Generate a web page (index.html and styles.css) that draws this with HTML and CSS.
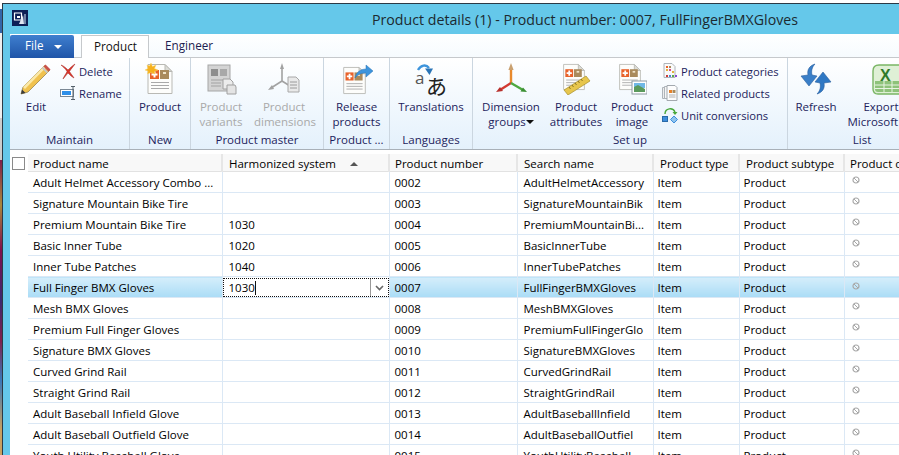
FILE: index.html
```html
<!DOCTYPE html>
<html lang="en">
<head>
    <meta charset="UTF-8">
    <title>Product details</title>
    <link rel="stylesheet" href="styles.css">
</head>
<body>
    <svg class="defs" width="0" height="0">
        <symbol id="doc" viewBox="0 0 30 32">
            <path d="M3 1.500h17l7 7v22H3z" fill="#fdfdfb" stroke="#b9b9b4"/>
            <path d="M20 1.500v7h7z" fill="#dcdcd6" stroke="#b9b9b4"/>
            <rect x="5" y="7" width="9" height="9" fill="#e8622a"/>
            <path d="M9.500 8.500v6M6.500 11.500h6" stroke="#fff" stroke-width="2"/>
            <rect x="15" y="7" width="9" height="9" fill="#a98a5c"/>
            <rect x="18" y="9" width="3" height="2" fill="#efe3c8"/>
            <path d="M6 19.500h18M6 22.500h18M6 25.500h18" stroke="#a9a9a9"/>
        </symbol>
        <symbol id="axes" viewBox="0 0 32 32">
            <path d="M16 20V5" stroke="#e8892c" stroke-width="2.400"/>
            <path d="M16 0l2.600 7h-5.200z" fill="#c9a070"/>
            <path d="M16 20L5 27" stroke="#d23a32" stroke-width="2.400"/>
            <path d="M1 29l4-5 3 4z" fill="#b8302c"/>
            <path d="M16 20l12 7" stroke="#4ea83f" stroke-width="2.400"/>
            <path d="M32 29l-6.500-.5 2.500-4z" fill="#3b8f33"/>
        </symbol>
        <symbol id="blocked" viewBox="0 0 8 8">
            <circle cx="4" cy="4" r="3" fill="none" stroke="#a8a8a8" stroke-width="1.200"/>
            <path d="M2 2l4 4" stroke="#a8a8a8"/>
        </symbol>
    </svg>

    <div class="desktop-strip"></div>
    <div class="window">
        <div class="titlebar">
            <svg class="app-icon" width="16" height="16" viewBox="0 0 16 16">
                <rect width="16" height="16" fill="#0c1f56"/>
                <path d="M2.500 3h7v7h-7z" fill="none" stroke="#fff" stroke-width="1.200"/>
                <path d="M5 6h3v2H5z" fill="#fff"/>
                <path d="M7 14l4-9 1 9z" fill="#dfe6f2"/>
                <path d="M13 4v10" stroke="#9fb0cc" stroke-width="1.400"/>
            </svg>
            <div class="title">Product details (1) - Product number: 0007, FullFingerBMXGloves</div>
        </div>

        <div class="tabs">
            <div class="file-tab">File <span class="file-caret"></span></div>
            <div class="tab active">Product</div>
            <div class="tab">Engineer</div>
        </div>

        <div class="ribbon">
            <div class="group maintain">
                <div class="group-body">
                    <div class="big edit-btn">
                        <div class="big-icon">
                            <svg width="32" height="32" viewBox="0 0 32 32">
                                <path d="M1 31l2-7L25 2l5 5L8 29z" fill="#f0c24f" stroke="#8d7a45" stroke-width=".7"/>
                                <path d="M3 24L25 2l1.800 1.800L5 26z" fill="#fbe9a8"/>
                                <path d="M25.500 1.500l5 5-2 2-5-5z" fill="#c8524c"/>
                                <path d="M23 4l5 5-1.200 1.200-5-5z" fill="#c4c8cc"/>
                                <path d="M1 31l1-4.500 3.500 3.500z" fill="#3b3b3b"/>
                            </svg>
                        </div>
                        <div class="big-label">Edit</div>
                    </div>
                    <div class="small-list">
                        <div class="small">
                            <svg width="16" height="16" viewBox="0 0 16 16">
                                <path d="M1 2c3 1 5 3 7 5 2-2 4-4 7-6-2 3-4 5-5.500 7.500C11 11 13 13 14 15c-2-1-4-3-6-5-2 2-3 4-5 6 1-3 3-5 4-7.500C5 5 3 4 1 2z" fill="#d8342a" stroke="#a82a24" stroke-width=".5"/>
                            </svg>
                            <span>Delete</span>
                        </div>
                        <div class="small">
                            <svg width="16" height="16" viewBox="0 0 16 16">
                                <rect x=".5" y="4.500" width="13" height="7" fill="#fff" stroke="#7a8794"/>
                                <rect x="2" y="6" width="9" height="4" fill="#2f8fe8"/>
                                <path d="M11 1.500h4M13 1.500v13M11 14.500h4" stroke="#55606b" fill="none"/>
                            </svg>
                            <span>Rename</span>
                        </div>
                    </div>
                </div>
                <div class="group-title">Maintain</div>
            </div>

            <div class="group new-group">
                <div class="group-body">
                    <div class="big wide">
                        <div class="big-icon">
                            <svg width="30" height="32" viewBox="0 0 30 32">
                                <use href="#doc"/>
                                <path d="M6 0l1.500 3.500L11 2 9.500 5.500 13 7 9.500 8.500 10 11 6 9.500 2.500 11 3 8 0 7l3-1.500L2 2l2.500 1z" fill="#f6b01e" stroke="#f9d66a" stroke-width=".5"/>
                            </svg>
                        </div>
                        <div class="big-label">Product</div>
                    </div>
                </div>
                <div class="group-title">New</div>
            </div>

            <div class="group master">
                <div class="group-body">
                    <div class="big wide disabled">
                        <div class="big-icon">
                            <svg width="32" height="32" viewBox="0 0 32 32">
                                <rect x="3" y="2" width="22" height="26" fill="#d4d4d4" stroke="#a6a6a6"/>
                                <rect x="6" y="6" width="7" height="7" fill="#8e8e8e"/>
                                <rect x="15" y="6" width="7" height="7" fill="#a8a8a8"/>
                                <path d="M6 17h16M6 20h10M6 23h10" stroke="#a2a2a2"/>
                                <path d="M18 16h7l3 3v7h-10z" fill="#ececec" stroke="#a0a0a0"/>
                                <path d="M22 22h8l1 2v7h-9z" fill="#e4e4e4" stroke="#a0a0a0"/>
                            </svg>
                        </div>
                        <div class="big-label">Product variants</div>
                    </div>
                    <div class="big wide disabled dims">
                        <div class="big-icon">
                            <svg width="32" height="32" viewBox="0 0 32 32">
                                <path d="M14 18V5M14 18L3 25M14 18l8 5" stroke="#a2a2a2" stroke-width="1.600" fill="none"/>
                                <path d="M14 0l2 6h-4zM0 27l4-5 2 4z" fill="#a2a2a2"/>
                                <path d="M20 14h8l3 3v12H20z" fill="#e9e9e9" stroke="#a8a8a8"/>
                                <path d="M22 19h7M22 22h7M22 25h7" stroke="#9a9a9a"/>
                            </svg>
                        </div>
                        <div class="big-label">Product dimensions</div>
                    </div>
                </div>
                <div class="group-title">Product master</div>
            </div>

            <div class="group release">
                <div class="group-body">
                    <div class="big fill">
                        <div class="big-icon">
                            <svg width="32" height="32" viewBox="0 0 32 32">
                                <use href="#doc" width="27" height="29" y="3"/>
                                <path d="M14 15c1-6 6-9 11-9V2l7 6-7 6v-4c-4 0-8 1-11 5z" fill="#3d94dc" stroke="#2a74b6" stroke-width=".5"/>
                            </svg>
                        </div>
                        <div class="big-label">Release products</div>
                    </div>
                </div>
                <div class="group-title">Product ...</div>
            </div>

            <div class="group languages">
                <div class="group-body">
                    <div class="big fill">
                        <div class="big-icon translate">
                            <svg class="translate-arrow" width="18" height="12" viewBox="0 0 18 12">
                                <path d="M1 6C4 1 9 0 12 4" fill="none" stroke="#3d94dc" stroke-width="2.400"/>
                                <path d="M8 4.500h8L12.500 11z" fill="#2a74b6"/>
                            </svg>
                            <span class="tr-a">a</span>
                            <span class="tr-jp">あ</span>
                        </div>
                        <div class="big-label">Translations</div>
                    </div>
                </div>
                <div class="group-title">Languages</div>
            </div>

            <div class="group setup">
                <div class="group-body">
                    <div class="big dimension-btn">
                        <div class="big-icon">
                            <svg width="32" height="32"><use href="#axes"/></svg>
                        </div>
                        <div class="big-label">Dimension groups<span class="mini-caret"></span></div>
                    </div>
                    <div class="big attributes-btn">
                        <div class="big-icon">
                            <svg width="30" height="32" viewBox="0 0 30 32">
                                <use href="#doc" width="26" height="28"/>
                                <path d="M3 27L25 13l4 5L7 32z" fill="#e7c64c" stroke="#a88f2e" stroke-width=".7"/>
                                <path d="M8 24l1.500 2M11 22l1.500 2M14 20l1.500 2M17 18l1.500 2M20 16l1.500 2" stroke="#8a7422"/>
                            </svg>
                        </div>
                        <div class="big-label">Product attributes</div>
                    </div>
                    <div class="big image-btn">
                        <div class="big-icon">
                            <svg width="30" height="32" viewBox="0 0 30 32">
                                <use href="#doc" width="26" height="28"/>
                                <rect x="15" y="18" width="15" height="13" fill="#fff" stroke="#8d99a2"/>
                                <rect x="17" y="20" width="11" height="5" fill="#6fb8e6"/>
                                <path d="M17 29v-5l4-2 7 4v3z" fill="#5a9a5c"/>
                            </svg>
                        </div>
                        <div class="big-label">Product image</div>
                    </div>
                    <div class="small-list">
                        <div class="small">
                            <svg width="16" height="16" viewBox="0 0 16 16">
                                <path d="M2 .5h8l3 3v11H2z" fill="#fafafa" stroke="#aeb4ba"/>
                                <path d="M4 3h2v2H4z" fill="#e8622a"/><path d="M7 3h2v2H7z" fill="#a98a5c"/>
                                <path d="M4 6h2v2H4z" fill="#e2b23a"/><path d="M7 6h2v2H7z" fill="#d84a8a"/>
                                <path d="M4 12h2v2H4z" fill="#c93a3a"/><path d="M7 12h2v2H7z" fill="#4a8ad8"/>
                                <path d="M10 12h2v2h-2z" fill="#5aa84a"/><path d="M13 12h2v2h-2z" fill="#8a4ad0"/>
                                <path d="M10 8h2v2h-2z" fill="#e2b23a"/>
                            </svg>
                            <span>Product categories</span>
                        </div>
                        <div class="small">
                            <svg width="16" height="16" viewBox="0 0 16 16">
                                <path d="M.5 2.500h8v11h-8z" fill="#eee" stroke="#aeb4ba"/>
                                <path d="M2.500 1.500h8v12h-8z" fill="#f6f6f6" stroke="#aeb4ba"/>
                                <path d="M5 .5h8l2 2v13H5z" fill="#fdfdfd" stroke="#a3a9af"/>
                                <path d="M7 5h3v3H7z" fill="#e8822a"/><path d="M10.500 5h3v3h-3z" fill="#a98a5c"/>
                                <path d="M7 10h6.500M7 12h6.500" stroke="#b0b0b0"/>
                            </svg>
                            <span>Related products</span>
                        </div>
                        <div class="small">
                            <svg width="16" height="16" viewBox="0 0 16 16">
                                <path d="M3 7c0-6 8-7 10-2" fill="none" stroke="#49a83c" stroke-width="1.400"/>
                                <path d="M10.500 5h5l-2.500 3z" fill="#49a83c"/>
                                <rect x=".5" y="9.500" width="5" height="5" fill="#3d8ddc" stroke="#2a6aa8"/>
                                <path d="M12 9l3.500 3.500L12 16l-3.500-3.500z" fill="#8ec4ee" stroke="#3d8ddc"/>
                            </svg>
                            <span>Unit conversions</span>
                        </div>
                    </div>
                </div>
                <div class="group-title">Set up</div>
            </div>

            <div class="group list">
                <div class="group-body">
                    <div class="big refresh-btn">
                        <div class="big-icon">
                            <svg width="32" height="32" viewBox="0 0 32 32">
                                <path d="M15 1C9 3 7 7 8 12L1 13l8 10 8-10-5-1C11 8 12 4 15 1z" fill="#3a7fc8" stroke="#2c5f9e" stroke-width=".6"/>
                                <path d="M17 31c6-2 8-6 7-11l7-1-8-10-8 10 5 1c1 4 0 8-3 11z" fill="#2f78c4" stroke="#2c5f9e" stroke-width=".6"/>
                            </svg>
                        </div>
                        <div class="big-label">Refresh</div>
                    </div>
                    <div class="big export-btn">
                        <div class="big-icon">
                            <svg width="32" height="32" viewBox="0 0 32 32">
                                <path d="M1 8c0-4 2-6 6-6h25v29H6c-3 0-5-2-5-5z" fill="#dff0d6" stroke="#79b564" stroke-width="1.400"/>
                                <path d="M3 18h29v11H6c-2 0-3-1-3-3z" fill="#8ec27a"/>
                                <path d="M3 22h29M3 25.500h29M12 18v11M20 18v11M28 8v21" stroke="#e8f4e2"/>
                                <text class="xl-x" x="8" y="18">X</text>
                            </svg>
                        </div>
                        <div class="big-label">Export to Microsoft Excel</div>
                    </div>
                </div>
                <div class="group-title">List</div>
            </div>
        </div>

        <div class="content">
            <div class="gutter"><div class="checkbox"></div></div>
            <table class="grid">
                <colgroup>
                    <col class="col-name"><col class="col-system"><col class="col-number"><col class="col-search"><col class="col-type"><col class="col-subtype"><col class="col-last">
                </colgroup>
                <thead>
                    <tr>
                        <th>Product name</th>
                        <th><div class="sort-head">Harmonized system<span class="sort-arrow"></span></div></th>
                        <th>Product number</th>
                        <th>Search name</th>
                        <th>Product type</th>
                        <th>Product subtype</th>
                        <th>Product dimension group</th>
                    </tr>
                </thead>
                <tbody>
                    <tr><td>Adult Helmet Accessory Combo ...</td><td></td><td>0002</td><td>AdultHelmetAccessory</td><td>Item</td><td>Product</td><td><svg class="blocked"><use href="#blocked"/></svg></td></tr>
                    <tr><td>Signature Mountain Bike Tire</td><td></td><td>0003</td><td>SignatureMountainBik</td><td>Item</td><td>Product</td><td><svg class="blocked"><use href="#blocked"/></svg></td></tr>
                    <tr><td>Premium Mountain Bike Tire</td><td>1030</td><td>0004</td><td>PremiumMountainBi...</td><td>Item</td><td>Product</td><td><svg class="blocked"><use href="#blocked"/></svg></td></tr>
                    <tr><td>Basic Inner Tube</td><td>1020</td><td>0005</td><td>BasicInnerTube</td><td>Item</td><td>Product</td><td><svg class="blocked"><use href="#blocked"/></svg></td></tr>
                    <tr><td>Inner Tube Patches</td><td>1040</td><td>0006</td><td>InnerTubePatches</td><td>Item</td><td>Product</td><td><svg class="blocked"><use href="#blocked"/></svg></td></tr>
                    <tr class="selected">
                        <td>Full Finger BMX Gloves</td>
                        <td class="editing">
                            <div class="editor">
                                <span class="editor-text">1030</span>
                                <span class="editor-drop">
                                    <svg width="9" height="6" viewBox="0 0 9 6"><path d="M1 1l3.500 3.500L8 1" fill="none" stroke="#666" stroke-width="1.600"/></svg>
                                </span>
                            </div>
                        </td>
                        <td>0007</td><td>FullFingerBMXGloves</td><td>Item</td><td>Product</td><td><svg class="blocked"><use href="#blocked"/></svg></td>
                    </tr>
                    <tr><td>Mesh BMX Gloves</td><td></td><td>0008</td><td>MeshBMXGloves</td><td>Item</td><td>Product</td><td><svg class="blocked"><use href="#blocked"/></svg></td></tr>
                    <tr><td>Premium Full Finger Gloves</td><td></td><td>0009</td><td>PremiumFullFingerGlo</td><td>Item</td><td>Product</td><td><svg class="blocked"><use href="#blocked"/></svg></td></tr>
                    <tr><td>Signature BMX Gloves</td><td></td><td>0010</td><td>SignatureBMXGloves</td><td>Item</td><td>Product</td><td><svg class="blocked"><use href="#blocked"/></svg></td></tr>
                    <tr><td>Curved Grind Rail</td><td></td><td>0011</td><td>CurvedGrindRail</td><td>Item</td><td>Product</td><td><svg class="blocked"><use href="#blocked"/></svg></td></tr>
                    <tr><td>Straight Grind Rail</td><td></td><td>0012</td><td>StraightGrindRail</td><td>Item</td><td>Product</td><td><svg class="blocked"><use href="#blocked"/></svg></td></tr>
                    <tr><td>Adult Baseball Infield Glove</td><td></td><td>0013</td><td>AdultBaseballInfield</td><td>Item</td><td>Product</td><td><svg class="blocked"><use href="#blocked"/></svg></td></tr>
                    <tr><td>Adult Baseball Outfield Glove</td><td></td><td>0014</td><td>AdultBaseballOutfiel</td><td>Item</td><td>Product</td><td><svg class="blocked"><use href="#blocked"/></svg></td></tr>
                    <tr><td>Youth Utility Baseball Glove</td><td></td><td>0015</td><td>YouthUtilityBaseball</td><td>Item</td><td>Product</td><td><svg class="blocked"><use href="#blocked"/></svg></td></tr>
                </tbody>
            </table>
        </div>
    </div>
</body>
</html>
```

FILE: styles.css
```css
html, body {
    margin: 0;
    padding: 0;
    height: 455px;
    overflow: hidden;
}
body {
    display: flex;
    background-color: #fff;
    font-family: "Open Sans", "Noto Sans", Arial, sans-serif;
    font-size: 11.5px;
    color: #000;
}
.defs {
    position: absolute;
}
.desktop-strip {
    width: 2px;
    flex: none;
    background: linear-gradient(#fff 0, #fff 9px, #3465a8 9px, #3465a8 33px, #eee 33px, #eee 118px, #ccc 118px, #ccc 160px, #80204c 160px, #a8883c 205px, #80104c 250px, #3a2a70 300px, #80204c 340px, #3a78b8 380px, #c8a060 430px);
}
.window {
    flex: 1;
    min-width: 0;
    margin-top: 3px;
    border-top: 1px solid #2b3a46;
    border-left: 1px solid #2b3a46;
    background-color: #65c8ea;
    padding-left: 7px;
    display: flex;
    flex-direction: column;
    overflow: hidden;
}

/* title bar */
.titlebar {
    height: 30px;
    flex: none;
    display: flex;
    align-items: center;
}
.app-icon {
    margin-left: 2px;
    margin-top: -2px;
    flex: none;
}
.title {
    margin-left: 344px;
    font-size: 14.2px;
    white-space: nowrap;
    color: #1c2a30;
}

/* tabs */
.tabs {
    height: 24px;
    flex: none;
    box-sizing: border-box;
    padding-top: 1px;
    display: flex;
    background: linear-gradient(#fff, #f6fbfe);
    border-bottom: 1px solid #c6c9cc;
    font-size: 11.7px;
}
.file-tab {
    width: 64px;
    height: 23px;
    box-sizing: border-box;
    padding-left: 15px;
    line-height: 20px;
    background: linear-gradient(#3f7fcf, #1f55a8);
    border-radius: 2px 2px 0 0;
    color: #fff;
    margin-right: 7px;
}
.file-caret {
    display: inline-block;
    margin-left: 7px;
    vertical-align: 1px;
    border-left: 4px solid transparent;
    border-right: 4px solid transparent;
    border-top: 4px solid #fff;
}
.tab {
    padding: 0 16px;
    line-height: 21px;
    height: 23px;
    box-sizing: border-box;
    color: #1d1d50;
}
.tab.active {
    width: 68px;
    padding: 0 12px;
    height: 24px;
    background-color: #fff;
    border: 1px solid #c6c9cc;
    border-bottom: none;
    color: #111;
}

/* ribbon */
.ribbon {
    height: 91px;
    flex: none;
    display: flex;
    background: linear-gradient(#fff, #e4f1fc);
    border-bottom: 1px solid #a8b0b8;
    color: #1d1d5c;
    overflow: hidden;
}
.group {
    flex: none;
    box-sizing: border-box;
    display: flex;
    flex-direction: column;
    border-right: 1px solid #cbd6e0;
}
.maintain { width: 120px; }
.new-group { width: 61px; }
.master { width: 133px; }
.release { width: 66px; }
.languages { width: 83px; }
.setup { width: 315px; }
.list { width: 148px; border-right: none; }
.group-body {
    flex: 1;
    display: flex;
}
.group-title {
    height: 17px;
    line-height: 15px;
    text-align: center;
    white-space: nowrap;
}
.big {
    flex: none;
    display: flex;
    flex-direction: column;
    align-items: center;
    text-align: center;
}
.big-icon {
    height: 33px;
    padding-top: 5px;
    margin-bottom: 3px;
    position: relative;
}
.big-label {
    line-height: 15px;
    width: 100%;
}
.disabled {
    color: #a9a9a9;
}
.edit-btn { width: 52px; }
.wide { width: 60px; }
.dims { margin-left: 3px; }
.fill { width: 100%; }
.dimension-btn { width: 76px; }
.attributes-btn { width: 54px; }
.image-btn { width: 58px; }
.refresh-btn { width: 56px; }
.export-btn { width: 88px; }
.mini-caret {
    display: inline-block;
    vertical-align: 2px;
    border-left: 4px solid transparent;
    border-right: 4px solid transparent;
    border-top: 4px solid #111;
}
.small-list {
    display: flex;
    flex-direction: column;
    padding-top: 2px;
}
.small {
    height: 22px;
    display: flex;
    align-items: center;
    gap: 3px;
    font-size: 11.2px;
    white-space: nowrap;
}
.maintain .small-list { margin-left: -2px; }
.setup .small-list { margin-left: 1px; }
.translate {
    width: 36px;
}
.translate-arrow {
    position: absolute;
    left: 4px;
    top: 6px;
}
.tr-a {
    position: absolute;
    left: 2px;
    top: 9px;
    font-size: 17px;
    line-height: 22px;
    color: #555;
}
.tr-jp {
    position: absolute;
    left: 13px;
    top: 15px;
    font-family: "Noto Sans CJK JP", sans-serif;
    font-size: 21px;
    line-height: 24px;
    color: #222;
}
.xl-x {
    font-family: "Liberation Sans", sans-serif;
    font-weight: bold;
    font-size: 16px;
    fill: #2f7a2a;
}

/* grid */
.content {
    flex: 1;
    min-height: 0;
    display: flex;
    background-color: #fff;
    padding-top: 4px;
    overflow: hidden;
}
.gutter {
    width: 18px;
    flex: none;
}
.checkbox {
    width: 11px;
    height: 11px;
    margin: 3px 0 0 2px;
    border: 1px solid #8a8a8a;
}
.grid {
    border-collapse: collapse;
    table-layout: fixed;
    width: 875px;
    flex: none;
}
.col-name { width: 194px; }
.col-system { width: 167px; }
.col-number { width: 128px; }
.col-search { width: 136px; }
.col-type { width: 86px; }
.col-subtype { width: 105px; }
.col-last { width: 59px; }
.grid th {
    height: 15px;
    padding: 2px 0 0 5px;
    text-align: left;
    font-weight: normal;
    background-color: #f8f8f8;
    border-right: 2px solid #e6e6e6;
    border-bottom: 1px solid #e2e2e2;
    white-space: nowrap;
    overflow: hidden;
}
.sort-head {
    display: flex;
    justify-content: space-between;
    align-items: center;
    padding-right: 30px;
}
.sort-arrow {
    border-left: 4px solid transparent;
    border-right: 4px solid transparent;
    border-bottom: 4px solid #555;
}
.grid td {
    height: 20px;
    padding: 0 0 0 5px;
    border-right: 1px solid #dbe8f5;
    border-bottom: 1px solid #dbe8f5;
    white-space: nowrap;
    overflow: hidden;
}
/* header and cell text don't start at the same x in some columns */
.grid th:nth-child(2), .grid td:nth-child(2) { padding-left: 6px; }
.grid th:nth-child(4), .grid td:nth-child(4) { padding-left: 6px; }
.grid th:nth-child(5), .grid th:nth-child(6) { padding-left: 6px; }
.grid td:nth-child(5), .grid td:nth-child(6) { padding-left: 4px; }
.blocked {
    display: block;
    width: 8px;
    height: 8px;
    margin: -4px 0 0 2px;
}
.selected td {
    background: linear-gradient(#d5eefb, #aadcf6);
    border-top: 1px solid #9fd4ef;
    height: 19px;
    padding-top: 1px;
}
.grid td.editing {
    background: #fff;
    padding: 1px 0 0;
    height: 19px;
}
.editor {
    height: 19px;
    display: flex;
    justify-content: space-between;
    border: 1px dotted #111;
    box-sizing: border-box;
    line-height: 18px;
    padding-left: 5px;
}
.editor-text {
    border-right: 1px solid #111;
    height: 14px;
    line-height: 14px;
    margin-top: 2px;
}
.editor-drop {
    width: 17px;
    border-left: 1px solid #999;
    display: flex;
    align-items: center;
    justify-content: center;
}
```
